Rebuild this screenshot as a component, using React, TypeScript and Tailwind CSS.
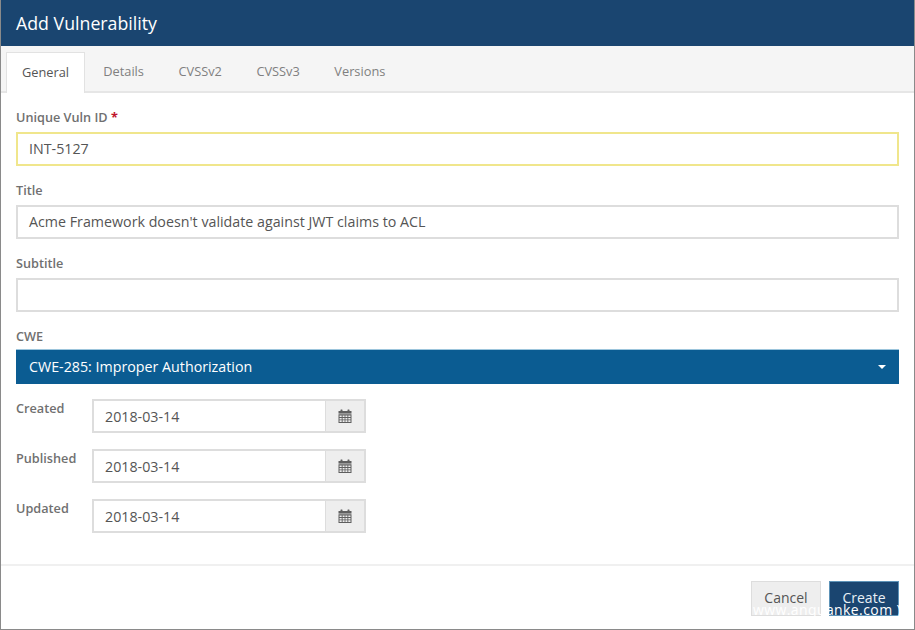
import { ReactNode } from "react"

const tabs = ["General", "Details", "CVSSv2", "CVSSv3", "Versions"]
const dates = ["Created", "Published", "Updated"]

function CalendarIcon() {
  return (
    <svg width="14" height="14" viewBox="0 0 14 14" fill="#5f5f5f">
      <rect x="2.5" y="0.5" width="2" height="3" rx="0.5" />
      <rect x="9.5" y="0.5" width="2" height="3" rx="0.5" />
      <path d="M0.5 2h13v2.6H0.5z" />
      <path
        fillRule="evenodd"
        d="M0.5 5.2h13V14H0.5z M1.5 6.4v1.6h2.2V6.4z M4.6 6.4v1.6h2V6.4z M7.4 6.4v1.6h2V6.4z M10.3 6.4v1.6h2.2V6.4z M1.5 8.9v1.6h2.2V8.9z M4.6 8.9v1.6h2V8.9z M7.4 8.9v1.6h2V8.9z M10.3 8.9v1.6h2.2V8.9z M1.5 11.3v1.6h2.2v-1.6z M4.6 11.3v1.6h2v-1.6z M7.4 11.3v1.6h2v-1.6z M10.3 11.3v1.6h2.2v-1.6z"
      />
    </svg>
  )
}

function Field({ label, labelHeight = "h-[24px]", children }: { label: ReactNode; labelHeight?: string; children: ReactNode }) {
  return (
    <div className="flex flex-col">
      <label className={`${labelHeight} text-[12.7px] leading-[19px] font-semibold text-[#707070]`}>{label}</label>
      {children}
    </div>
  )
}

function TextBox({ value, className = "border-[#ddd]" }: { value?: string; className?: string }) {
  return (
    <div className={`h-[34px] border-2 bg-white pl-[11px] text-[14.25px] leading-[30px] text-[#555] ${className}`}>
      {value}
    </div>
  )
}

export default function App() {
  return (
    <div
      className="relative flex h-[630px] w-[915px] flex-col overflow-hidden border-r border-b border-l border-[#8a8a8a] bg-white"
      style={{ fontFamily: '"Open Sans", sans-serif' }}
    >
      <div className="flex h-[46px] shrink-0 items-center bg-[#1a4570] pl-[15px] text-[17.75px] text-white">
        Add Vulnerability
      </div>

      <div className="flex h-[47px] shrink-0 items-end border-b-2 border-[#e6e6e6] bg-[#f5f5f5] pl-[5px]">
        {tabs.map((tab, i) => (
          <div
            key={tab}
            className={
              i === 0
                ? "relative mr-[1px] -mb-[2px] flex h-[41px] w-[79px] items-center justify-center border-x border-t border-[#e2e2e2] bg-white text-[12.8px] text-[#555]"
                : "flex h-[39px] items-center px-[17.25px] pt-[1px] text-[12.8px] text-[#808080]"
            }
          >
            {tab}
          </div>
        ))}
      </div>

      <div className="flex flex-1 flex-col gap-[15px] px-[15px] pt-[15px]">
        <Field
          label={
            <>
              Unique Vuln ID <span className="font-bold text-[#c0142c]">*</span>
            </>
          }
        >
          <TextBox value="INT-5127" className="border-[#f0e68c]" />
        </Field>
        <Field label="Title">
          <TextBox value="Acme Framework doesn't validate against JWT claims to ACL" />
        </Field>
        <Field label="Subtitle">
          <TextBox />
        </Field>
        <Field label="CWE" labelHeight="h-[22px]">
          <div className="flex h-[35px] items-center justify-between border-t border-[#9cc5dc] bg-[#0b5c92] px-[13px] text-[14.25px] text-white">
            <span>CWE-285: Improper Authorization</span>
            <span className="h-0 w-0 border-x-[4px] border-t-[4px] border-x-transparent border-t-white" />
          </div>
        </Field>

        <div className="flex flex-col gap-[16px]">
          {dates.map((name) => (
            <div key={name} className="flex items-start">
              <div className="w-[76px] pt-[1px] text-[12.7px] leading-[17px] font-semibold text-[#707070]">{name}</div>
              <div className="flex h-[34px] w-[274px] border-2 border-[#ddd]">
                <div className="flex-1 bg-white pl-[11px] text-[14.25px] leading-[31px] text-[#555]">2018-03-14</div>
                <div className="flex w-[39px] items-center justify-center border-l border-[#ddd] bg-[#eee]">
                  <CalendarIcon />
                </div>
              </div>
            </div>
          ))}
        </div>
      </div>

      <div className="flex h-[65px] shrink-0 items-start justify-end gap-[8px] border-t-2 border-[#f0f0f0] pt-[15px] pr-[15px]">
        <div className="flex h-[35px] w-[70px] items-center justify-center border border-[#ddd] bg-[#eee] pb-[2px] text-[14px] text-[#555]">
          Cancel
        </div>
        <div className="flex h-[35px] w-[70px] items-center justify-center border border-[#5d93b8] bg-[#1a4570] pb-[2px] text-[14px] text-[#e8f0f6]">
          Create
        </div>
      </div>

      {/* watermark burned into the screenshot */}
      <div className="absolute top-[601px] left-[752px] text-[14px] leading-[18px] tracking-[0.4px] whitespace-nowrap text-white">
        www.anquanke.com )
      </div>
    </div>
  )
}
